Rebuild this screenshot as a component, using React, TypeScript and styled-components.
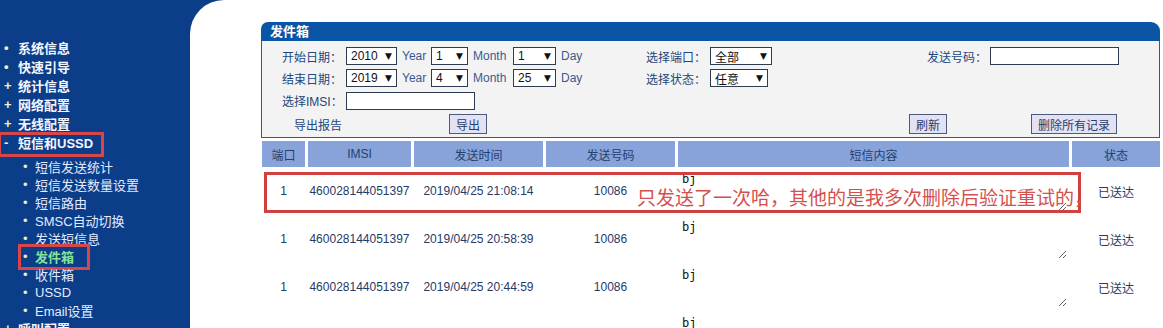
import React from 'react'
import styled, { createGlobalStyle } from 'styled-components'

const GlobalStyle = createGlobalStyle`
  html, body {
    margin: 0;
    padding: 0;
    overflow: hidden;
    background: #ffffff;
  }
  body {
    font-family: "Liberation Sans", "Noto Sans CJK SC", sans-serif;
  }
`

const topMenu = [
  { mark: '•', label: '系统信息' },
  { mark: '•', label: '快速引导' },
  { mark: '+', label: '统计信息' },
  { mark: '+', label: '网络配置' },
  { mark: '+', label: '无线配置' },
]

const subMenu = [
  '短信发送统计',
  '短信发送数量设置',
  '短信路由',
  'SMSC自动切换',
  '发送短信息',
  '发件箱',
  '收件箱',
  'USSD',
  'Email设置',
]

const records = [
  { port: '1', imsi: '460028144051397', time: '2019/04/25 21:08:14', num: '10086', text: 'bj', state: '已送达' },
  { port: '1', imsi: '460028144051397', time: '2019/04/25 20:58:39', num: '10086', text: 'bj', state: '已送达' },
  { port: '1', imsi: '460028144051397', time: '2019/04/25 20:44:59', num: '10086', text: 'bj', state: '已送达' },
  { port: '1', imsi: '460028144051397', time: '2019/04/25 20:31:02', num: '10086', text: 'bj', state: '已送达' },
]

export default function App() {
  return (
    <Page>
      <GlobalStyle />
      <Sidebar>
        {topMenu.map((m) => (
          <TopItem key={m.label}>
            <Mark>{m.mark}</Mark>
            {m.label}
          </TopItem>
        ))}
        <TopItem $marked>
          <Mark>-</Mark>
          短信和USSD
        </TopItem>
        <SubList>
          {subMenu.map((s) => (
            <SubItem key={s} $active={s === '发件箱'}>
              <SubMark>•</SubMark>
              {s}
            </SubItem>
          ))}
        </SubList>
        <TopItem>
          <Mark>+</Mark>
          呼叫配置
        </TopItem>
      </Sidebar>

      <Main>
        <Panel>
          <TitleBar>发件箱</TitleBar>
          <Form>
            <FormRow $h={22}>
              <Group $w={364}>
                <Label>开始日期：</Label>
                <FakeSelect $w={51}>2010<Arrow>▼</Arrow></FakeSelect>
                <Unit $w={34}>Year</Unit>
                <FakeSelect $w={37}>1<Arrow>▼</Arrow></FakeSelect>
                <Unit $w={45}>Month</Unit>
                <FakeSelect $w={43}>1<Arrow>▼</Arrow></FakeSelect>
                <Unit>Day</Unit>
              </Group>
              <Group $w={281}>
                <Label>选择端口：</Label>
                <FakeSelect $w={62}>全部<Arrow>▼</Arrow></FakeSelect>
              </Group>
              <Group>
                <Label $w={63}>发送号码：</Label>
                <TextBox $w={129} />
              </Group>
            </FormRow>
            <FormRow $h={22}>
              <Group $w={364}>
                <Label>结束日期：</Label>
                <FakeSelect $w={51}>2019<Arrow>▼</Arrow></FakeSelect>
                <Unit $w={34}>Year</Unit>
                <FakeSelect $w={37}>4<Arrow>▼</Arrow></FakeSelect>
                <Unit $w={45}>Month</Unit>
                <FakeSelect $w={43}>25<Arrow>▼</Arrow></FakeSelect>
                <Unit>Day</Unit>
              </Group>
              <Group $w={281}>
                <Label>选择状态：</Label>
                <FakeSelect $w={58}>任意<Arrow>▼</Arrow></FakeSelect>
              </Group>
            </FormRow>
            <FormRow $h={23}>
              <Group $w={364}>
                <Label>选择IMSI：</Label>
                <TextBox $w={129} />
              </Group>
            </FormRow>
            <FormRow $h={24}>
              <Group $w={364}>
                <Label $w={155} $indent={12}>导出报告</Label>
                <Button>导出</Button>
              </Group>
              <Group $w={263} />
              <Group $w={122}>
                <Button>刷新</Button>
              </Group>
              <Group>
                <Button>删除所有记录</Button>
              </Group>
            </FormRow>
          </Form>

          <Table>
            <HeadCell>端口</HeadCell>
            <HeadCell>IMSI</HeadCell>
            <HeadCell>发送时间</HeadCell>
            <HeadCell>发送号码</HeadCell>
            <HeadCell>短信内容</HeadCell>
            <HeadCell>状态</HeadCell>
            {records.map((r, i) => (
              <React.Fragment key={i}>
                <Cell>{r.port}</Cell>
                <Cell>{r.imsi}</Cell>
                <Cell>{r.time}</Cell>
                <Cell>{r.num}</Cell>
                <ContentCell>
                  <MessageBox readOnly value={r.text} />
                </ContentCell>
                <Cell>{r.state}</Cell>
              </React.Fragment>
            ))}
          </Table>
        </Panel>

        <NoteBox />
        <NoteText>只发送了一次哈，其他的是我多次删除后验证重试的，</NoteText>
      </Main>
    </Page>
  )
}

const Page = styled.div`
  display: flex;
  width: 1163px;
  height: 328px;
  overflow: hidden;
  background: #0b3d89;
`

const Sidebar = styled.nav`
  width: 190px;
  flex-shrink: 0;
  padding-top: 38px;
  box-sizing: border-box;
  color: #ffffff;
`

const TopItem = styled.div<{ $marked?: boolean }>`
  position: relative;
  display: flex;
  align-items: center;
  width: fit-content;
  height: 19px;
  padding-left: 4px;
  font-family: "Liberation Sans", "Noto Sans CJK SC", sans-serif;
  font-size: 13px;
  font-weight: bold;
  color: #f4f6ff;
  white-space: nowrap;

  ${({ $marked }) =>
    $marked &&
    `
    &::after {
      content: '';
      position: absolute;
      left: -1px;
      top: -1px;
      right: -11px;
      bottom: -5px;
      border: 3px solid #d8464a;
      border-left-width: 2px;
    }
  `}
`

const Mark = styled.span`
  display: inline-block;
  width: 14px;
  color: #eef2c8;
  font-size: 13px;
  font-weight: bold;
  text-align: left;
`

const SubList = styled.div`
  padding-top: 5px;
`

const SubItem = styled.div<{ $active?: boolean }>`
  position: relative;
  display: flex;
  align-items: center;
  width: fit-content;
  height: 18px;
  padding-left: 23px;
  font-family: "Liberation Sans", "Noto Sans CJK SC", sans-serif;
  font-size: 13px;
  white-space: nowrap;
  color: ${({ $active }) => ($active ? '#86e39a' : '#e4eaff')};
  font-weight: ${({ $active }) => ($active ? 'bold' : 'normal')};

  ${({ $active }) =>
    $active &&
    `
    &::after {
      content: '';
      position: absolute;
      left: 18px;
      top: -3px;
      right: -16px;
      bottom: -5px;
      border: 3px solid #d8464a;
    }
  `}
`

const SubMark = styled.span`
  display: inline-block;
  width: 12px;
  color: #e6efc0;
  font-weight: normal;
`

const Main = styled.main`
  position: relative;
  flex: 1;
  background: #ffffff;
  border-top-left-radius: 34px;
  padding: 22px 0 0 71px;
  overflow: hidden;
`

const Panel = styled.section`
  width: 899px;
`

const TitleBar = styled.div`
  height: 19px;
  line-height: 20px;
  padding-left: 9px;
  background: #0a55a6;
  border-radius: 7px 9px 0 0;
  color: #ffffff;
  font-family: "Liberation Sans", "Noto Sans CJK SC", sans-serif;
  font-size: 13px;
  font-weight: bold;
`

const Form = styled.div`
  background: #f3f3f3;
  border: 1px solid #3d5685;
  border-top: none;
  padding: 4px 0 1px 20px;
`

const FormRow = styled.div<{ $h: number }>`
  display: flex;
  align-items: center;
  height: ${({ $h }) => $h}px;
`

const Group = styled.div<{ $w?: number }>`
  display: flex;
  align-items: center;
  flex-shrink: 0;
  width: ${({ $w }) => ($w ? `${$w}px` : 'auto')};
`

const Label = styled.span<{ $w?: number; $indent?: number }>`
  display: inline-block;
  width: ${({ $w }) => $w ?? 64}px;
  margin-left: ${({ $indent }) => $indent ?? 0}px;
  font-size: 12px;
  color: #24477b;
  white-space: nowrap;
`

const FakeSelect = styled.span<{ $w: number }>`
  display: flex;
  align-items: center;
  justify-content: space-between;
  box-sizing: border-box;
  width: ${({ $w }) => $w}px;
  height: 18px;
  padding: 0 4px 0 4px;
  background: #ffffff;
  border: 1px solid #2e3c52;
  font-size: 12px;
  color: #111111;
`

const Arrow = styled.span`
  font-family: "DejaVu Sans", sans-serif;
  font-size: 9px;
  color: #111111;
`

const Unit = styled.span<{ $w?: number }>`
  display: inline-block;
  width: ${({ $w }) => ($w ? `${$w}px` : 'auto')};
  padding-left: 5px;
  box-sizing: border-box;
  font-size: 12px;
  color: #3a5a8c;
`

const TextBox = styled.span<{ $w: number }>`
  display: inline-block;
  box-sizing: border-box;
  width: ${({ $w }) => $w}px;
  height: 18px;
  background: #ffffff;
  border: 1px solid #2e3c52;
`

const Button = styled.span`
  display: inline-flex;
  align-items: center;
  box-sizing: border-box;
  height: 20px;
  padding: 0 6px;
  background: #e2e2f4;
  border: 1px solid #4d5a7c;
  font-size: 12px;
  color: #263c6a;
  white-space: nowrap;
`

const Table = styled.div`
  display: grid;
  grid-template-columns: 43px 103px 129px 129px 391px 88px;
  grid-template-rows: 26px;
  grid-auto-rows: 48px;
  column-gap: 3px;
  margin: 3px 0 0 1px;
`

const HeadCell = styled.div`
  display: flex;
  align-items: center;
  justify-content: center;
  background: #87a3da;
  font-size: 12px;
  color: #243f6d;
`

const Cell = styled.div`
  display: flex;
  align-items: center;
  justify-content: center;
  font-size: 12px;
  color: #1f3b66;
  white-space: nowrap;
`

const ContentCell = styled.div`
  padding: 3px 0 0 1px;
`

const MessageBox = styled.textarea`
  display: block;
  box-sizing: border-box;
  width: 388px;
  height: 41px;
  padding: 2px 3px;
  margin: 0;
  border: none;
  outline: none;
  overflow: hidden;
  background: #ffffff;
  font-family: "DejaVu Sans Mono", monospace;
  font-size: 12px;
  line-height: 14px;
  color: #111111;
`

const NoteBox = styled.div`
  position: absolute;
  left: 74px;
  top: 172px;
  width: 817px;
  height: 41px;
  box-sizing: border-box;
  border: 3px solid #d0403f;
  pointer-events: none;
`

const NoteText = styled.div`
  position: absolute;
  left: 447px;
  top: 184px;
  font-family: "Noto Sans CJK SC", sans-serif;
  font-size: 19px;
  line-height: 26px;
  color: #d4504e;
  white-space: nowrap;
  pointer-events: none;
`
